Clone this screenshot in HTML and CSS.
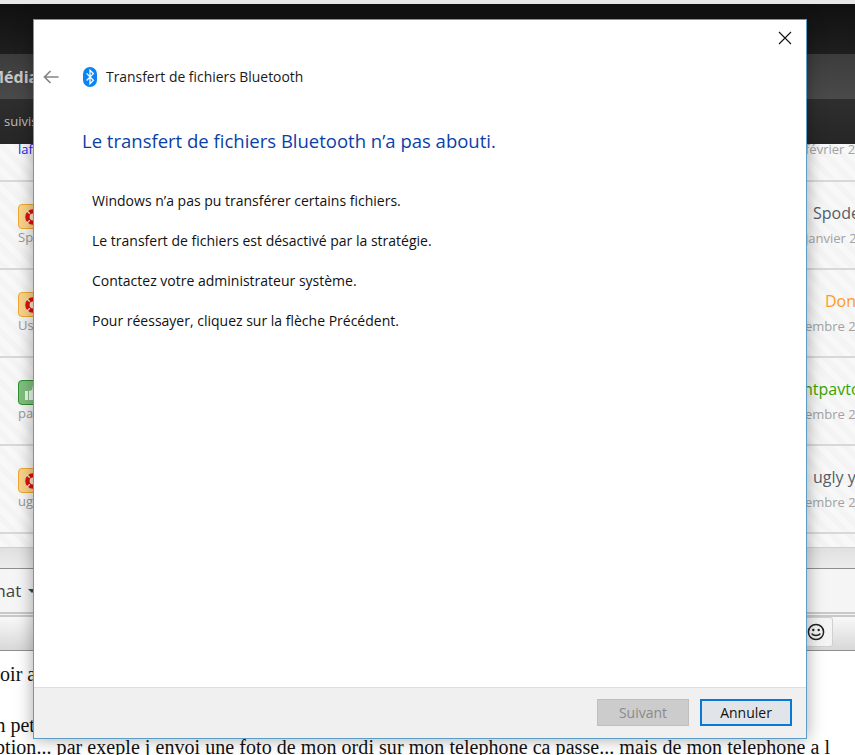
FILE: index.html
```html
<!DOCTYPE html>
<html lang="fr">
<head>
<meta charset="utf-8">
<title>Transfert de fichiers Bluetooth</title>
<link rel="stylesheet" href="styles.css">
</head>
<body>
<div class="page">
  <div class="topstrip"></div>
  <div class="blackbar"></div>
  <div class="navbar"><span class="navtitle">Médias</span></div>
  <div class="subnav"><span class="subtext">suivis</span></div>
  <div class="list">
    <div class="row row-first">
      <span class="author link">lafi</span>
      <span class="right"><span class="date">février 2</span></span>
    </div>
    <div class="row">
      <div class="left">
        <span class="badge badge-orange"><svg class="ring" viewBox="0 0 16 16"><circle cx="8" cy="8" r="5.6" fill="#fde9c8" stroke="#e01010" stroke-width="4.4"/><path d="M1.8 1.8l3 3M14.2 1.8l-3 3M1.8 14.2l3-3M14.2 14.2l-3-3" stroke="#fde9c8" stroke-width="1.3"/></svg></span>
        <span class="author">Spodek</span>
      </div>
      <div class="right"><span class="name">Spode</span><span class="date">janvier 2</span></div>
    </div>
    <div class="row">
      <div class="left">
        <span class="badge badge-orange"><svg class="ring" viewBox="0 0 16 16"><circle cx="8" cy="8" r="5.6" fill="#fde9c8" stroke="#e01010" stroke-width="4.4"/><path d="M1.8 1.8l3 3M14.2 1.8l-3 3M1.8 14.2l3-3M14.2 14.2l-3-3" stroke="#fde9c8" stroke-width="1.3"/></svg></span>
        <span class="author">User</span>
      </div>
      <div class="right"><span class="name name-orange">Don</span><span class="date">embre 2</span></div>
    </div>
    <div class="row">
      <div class="left">
        <span class="badge badge-green"><svg class="ring" viewBox="0 0 16 16"><path d="M0 6h3v9H0zM4 6l3-1 1-5h3v5h5v10H4z" fill="#f0f8f0"/></svg></span>
        <span class="author">pat</span>
      </div>
      <div class="right"><span class="name name-green">ntpavto</span><span class="date">embre 2</span></div>
    </div>
    <div class="row">
      <div class="left">
        <span class="badge badge-orange"><svg class="ring" viewBox="0 0 16 16"><circle cx="8" cy="8" r="5.6" fill="#fde9c8" stroke="#e01010" stroke-width="4.4"/><path d="M1.8 1.8l3 3M14.2 1.8l-3 3M1.8 14.2l3-3M14.2 14.2l-3-3" stroke="#fde9c8" stroke-width="1.3"/></svg></span>
        <span class="author">ugly</span>
      </div>
      <div class="right"><span class="name">ugly y</span><span class="date">embre 2</span></div>
    </div>
  </div>
  <div class="gap-strip"></div>
  <div class="format-bar"><span class="format">Format</span><span class="caret"></span></div>
  <div class="tool-bar">
    <span class="smiley-btn"><svg viewBox="0 0 20 20" class="smiley"><circle cx="10" cy="10" r="7.6" fill="none" stroke="#222" stroke-width="1.5"/><circle cx="7.3" cy="8" r="1.2" fill="#222"/><circle cx="12.7" cy="8" r="1.2" fill="#222"/><path d="M5.8 11.6c1 2.6 7.4 2.6 8.4 0" fill="none" stroke="#222" stroke-width="1.5"/></svg></span>
  </div>
  <div class="post">
    <p class="post-a">Pouvoir a</p>
    <p class="post-b">Un petit</p>
    <p class="post-c">option... par exeple j envoi une foto de mon ordi sur mon telephone ca passe... mais de mon telephone a l</p>
  </div>
</div>

<div class="dialog">
  <button class="close" aria-label="Fermer"><svg viewBox="0 0 14 14" class="close-icon"><path d="M1 1l12 12M13 1L1 13" stroke="#111" stroke-width="1.1" fill="none"/></svg></button>
  <div class="dialog-main">
    <div class="titlebar">
      <svg viewBox="0 0 16 14" class="back"><path d="M15.5 7H1.5M7.5 1L1.5 7l6 6" fill="none" stroke="#858585" stroke-width="1.7"/></svg>
      <svg viewBox="0 0 14 20" class="bt"><rect x="0" y="0" width="14" height="20" rx="7" fill="#0a84f0"/><path d="M3.6 6.4l6.8 6.9-3.4 3.4V3.2l3.4 3.4-6.8 6.9" fill="none" stroke="#fff" stroke-width="1.25"/></svg>
      <span class="window-title">Transfert de fichiers Bluetooth</span>
    </div>
    <h1 class="heading">Le transfert de fichiers Bluetooth n’a pas abouti.</h1>
    <div class="messages">
      <p>Windows n’a pas pu transférer certains fichiers.</p>
      <p>Le transfert de fichiers est désactivé par la stratégie.</p>
      <p>Contactez votre administrateur système.</p>
      <p>Pour réessayer, cliquez sur la flèche Précédent.</p>
    </div>
  </div>
  <div class="dialog-footer">
    <button class="btn btn-disabled" disabled>Suivant</button>
    <button class="btn btn-focus">Annuler</button>
  </div>
</div>
</body>
</html>
```
FILE: styles.css
```css
* { box-sizing: border-box; }
html, body { margin: 0; padding: 0; }
body {
  width: 855px;
  height: 755px;
  overflow: hidden;
  position: relative;
  background: #fff;
  font-family: "Open Sans", "Noto Sans", sans-serif;
}
.page { width: 855px; height: 755px; overflow: hidden; display: flex; flex-direction: column; }
.topstrip { height: 4px; background: #e8e8e8; flex: none; }
.blackbar { height: 50px; flex: none; background: linear-gradient(#101010, #1e1e1e); }
.navbar {
  height: 45px; flex: none;
  background: linear-gradient(#3c3c3c, #4a4a4a);
  display: flex; align-items: center;
}
.navtitle {
  font: bold 16px "Open Sans", sans-serif; color: #c8c8c8;
  margin-left: -11px;
}
.subnav {
  height: 45px; flex: none;
  background: linear-gradient(#2e2e2e, #262626);
  display: flex; align-items: flex-start; padding-top: 14px;
}
.subtext { font-size: 13px; color: #bdbdbd; margin-left: 4px; line-height: 17px; }
.list {
  height: 403px; flex: none;
  background: #f6f6f6;
  background-image: repeating-linear-gradient(45deg, #f8f8f8 0 6px, #f4f4f4 6px 12px);
  display: flex; flex-direction: column;
}
.row {
  height: 88px; flex: none;
  border-bottom: 2px solid #d8d8d8;
  display: flex; justify-content: space-between;
  padding-top: 22px;
}
.row-first { height: 38px; padding-top: 0; align-items: flex-start; }
.left { display: flex; flex-direction: column; margin-left: 18px; }
.badge {
  width: 32px; height: 25px; border-radius: 4px; border: 1px solid;
  display: flex; align-items: center; justify-content: center;
}
.badge-orange { background: #fad48a; border-color: #f0a830; }
.badge-green { background: #7fc07f; border-color: #2f8f2f; }
.ring { width: 16px; height: 16px; margin-right: 2px; }
.author { font-size: 13px; color: #999; line-height: 17px; }
.row-first .link { color: #2a22e8; margin-left: 18px; line-height: 12px; margin-top: -1px; }
.right { display: flex; flex-direction: column; align-items: flex-end; margin-right: -10px; width: 120px; }
.name { font-size: 16px; color: #555e68; line-height: 22px; margin: -2px 0 6px; width: 52px; white-space: nowrap; overflow: hidden; }
.name-orange { color: #ff9a1e; padding-left: 12px; }
.name-green { color: #36a400; width: 62px; }
.date { font-size: 13px; color: #a2a2a2; line-height: 17px; white-space: nowrap; width: 60px; }
.row-first .date { line-height: 12px; display: block; margin-top: -1px; }
.gap-strip {
  height: 22px; flex: none;
  background: linear-gradient(#e0e0e0, #ececec);
  border-top: 1px solid #d0d0d0;
  border-bottom: 1px solid #8e8e8e;
}
.format-bar {
  height: 48px; flex: none;
  background: #f5f5f5;
  border-bottom: 5px double #c8c8c8;
  display: flex; align-items: center;
}
.format { font-size: 17px; color: #444; margin-left: -36px; }
.caret {
  width: 0; height: 0; margin-left: 7px;
  border-left: 4px solid transparent; border-right: 4px solid transparent; border-top: 4px solid #444;
}
.tool-bar {
  height: 34px; flex: none;
  background: linear-gradient(#f8f8f8, #d8d8d8);
  border-bottom: 1px solid #8e8e8e;
  display: flex; justify-content: flex-end; align-items: flex-start;
  padding-right: 22px;
}
.smiley-btn {
  width: 27px; height: 30px;
  border: 1px solid #d0d0d0; border-left: 0; border-radius: 0 3px 3px 0;
  background: #f4f4f4; display: flex; align-items: center; justify-content: center;
  padding-right: 6px;
}
.smiley { width: 20px; height: 20px; }
.post {
  flex: 1; background: #fff; overflow: hidden; width: 830px;
  font: 20px "Liberation Serif", serif; color: #111; white-space: nowrap;
}
.post p { margin: 0; line-height: 20px; }
.post-a { margin-left: -41px !important; padding-top: 13px; }
.post-b { margin-left: -19px !important; padding-top: 31px; }
.post-c { padding-top: 2px; display: flex; justify-content: flex-end; letter-spacing: 0.05px; }

.dialog {
  position: absolute; left: 33px; top: 19px;
  width: 774px; height: 720px;
  background: #fff;
  border: 1px solid #5a9ec6;
  box-shadow: 0 0 16px rgba(0, 0, 0, 0.35);
  display: flex; flex-direction: column;
}
.close {
  position: absolute; right: 13px; top: 10px;
  width: 15px; height: 15px; padding: 0; border: 0; background: none;
}
.close-icon { width: 14px; height: 14px; display: block; }
.dialog-main { flex: 1; padding-top: 46px; }
.titlebar { display: flex; align-items: center; height: 21px; padding-left: 9px; }
.back { width: 16px; height: 14px; flex: none; }
.bt { width: 14px; height: 20px; flex: none; margin-left: 24px; }
.window-title { margin-left: 9px; font-size: 13.9px; color: #1a1a1a; white-space: nowrap; }
.heading {
  margin: 41px 0 0 48px;
  font-size: 18.5px; font-weight: 400; line-height: 26px; color: #0a3fa8;
  white-space: nowrap;
}
.messages { margin: 37px 0 0 58px; font-size: 14px; line-height: 20px; color: #111; }
.messages p { margin: 0 0 20px; white-space: nowrap; }
.dialog-footer {
  height: 51px; flex: none;
  background: #f0f0f0;
  border-top: 1px solid #dfdfdf;
  display: flex; justify-content: flex-end; align-items: flex-start;
  padding: 11px 14px 0 0; gap: 11px;
}
.btn {
  width: 92px; height: 27px; padding: 0;
  font: 14px "Open Sans", sans-serif;
}
.btn-disabled { background: #cccccc; border: 1px solid #bfbfbf; color: #8a8a8a; }
.btn-focus { background: #e1e5e9; border: 2px solid #0a78d7; color: #111; }
```
